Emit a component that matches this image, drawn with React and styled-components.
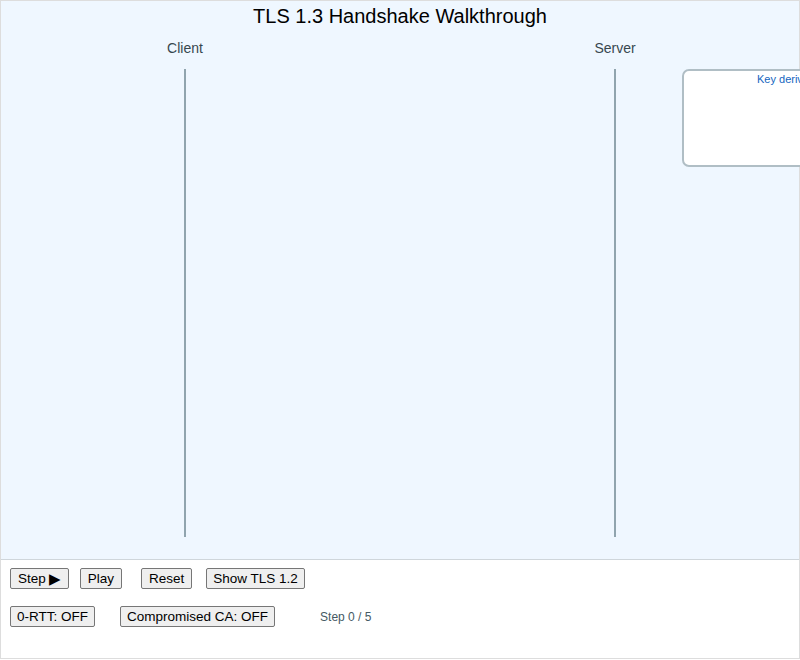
import React from 'react';
import styled, { createGlobalStyle } from 'styled-components';

const GlobalStyle = createGlobalStyle`
  html, body {
    margin: 0;
    padding: 0;
    background: #fff;
    font-family: "Liberation Sans", Arial, sans-serif;
  }
  * { box-sizing: border-box; }
`;

const Frame = styled.div`
  width: 800px;
  height: 659px;
  border: 1px solid #dddddd;
  display: flex;
  flex-direction: column;
`;

const Stage = styled.div`
  position: relative;
  height: 559px;
  background: #eff7ff;
  border-bottom: 1px solid #cfd6db;
  overflow: visible;
`;

const Title = styled.h2`
  margin: 0;
  padding-top: 3px;
  text-align: center;
  font-size: 20px;
  font-weight: 400;
  color: #000;
  line-height: 24px;
`;

const Diagram = styled.svg`
  position: absolute;
  left: -1px;
  top: -1px;
  overflow: visible;
`;

const Controls = styled.div`
  flex: 1;
  padding: 8px 9px 0;
  display: flex;
  flex-direction: column;
  gap: 17px;
`;

const Row = styled.div`
  display: flex;
  align-items: center;
`;

const Button = styled.button`
  margin-left: ${(p) => p.$ml || 0}px;
  height: 21px;
  display: inline-flex;
  align-items: center;
  font-family: "Liberation Sans", Arial, sans-serif;
  font-size: 13.5px;
  line-height: 16px;
  padding: 0 ${(p) => p.$px ?? 7}px;
  color: #000;
  background: #efefef;
  border: 1px solid #767676;
  border-radius: 2px;
`;

const Arrow = styled.span`
  margin-left: 3px;
  font-size: 15px;
  line-height: 16px;
`;

const Status = styled.span`
  margin-left: ${(p) => p.$ml || 0}px;
  font-size: 12px;
  color: #455a64;
`;

const Lifeline = ({ x, label }) => (
  <g>
    <text x={x} y={53} textAnchor="middle" fontSize="14" fill="#37474f"
      fontFamily="Liberation Sans, Arial, sans-serif">{label}</text>
    <line x1={x} y1={69} x2={x} y2={537} stroke="#90a4ae" strokeWidth="2" />
  </g>
);

export default function App() {
  return (
    <>
      <GlobalStyle />
      <Frame>
        <Stage>
          <Title>TLS 1.3 Handshake Walkthrough</Title>
          <Diagram width="800" height="559">
            <Lifeline x={185} label="Client" />
            <Lifeline x={615} label="Server" />
            <rect x={683} y={70} width={200} height={96} rx={6}
              fill="#fff" stroke="#b0bec5" strokeWidth="2" />
            <text x={757} y={83} fontSize="11" fill="#1565c0"
              fontFamily="Liberation Sans, Arial, sans-serif">Key derivation</text>
          </Diagram>
        </Stage>
        <Controls>
          <Row>
            <Button>Step<Arrow>▶</Arrow></Button>
            <Button $ml={11}>Play</Button>
            <Button $ml={19}>Reset</Button>
            <Button $ml={14} $px={6}>Show TLS 1.2</Button>
          </Row>
          <Row>
            <Button $px={6}>0-RTT: OFF</Button>
            <Button $ml={25} $px={6}>Compromised CA: OFF</Button>
            <Status $ml={45}>Step 0 / 5</Status>
          </Row>
        </Controls>
      </Frame>
    </>
  );
}
